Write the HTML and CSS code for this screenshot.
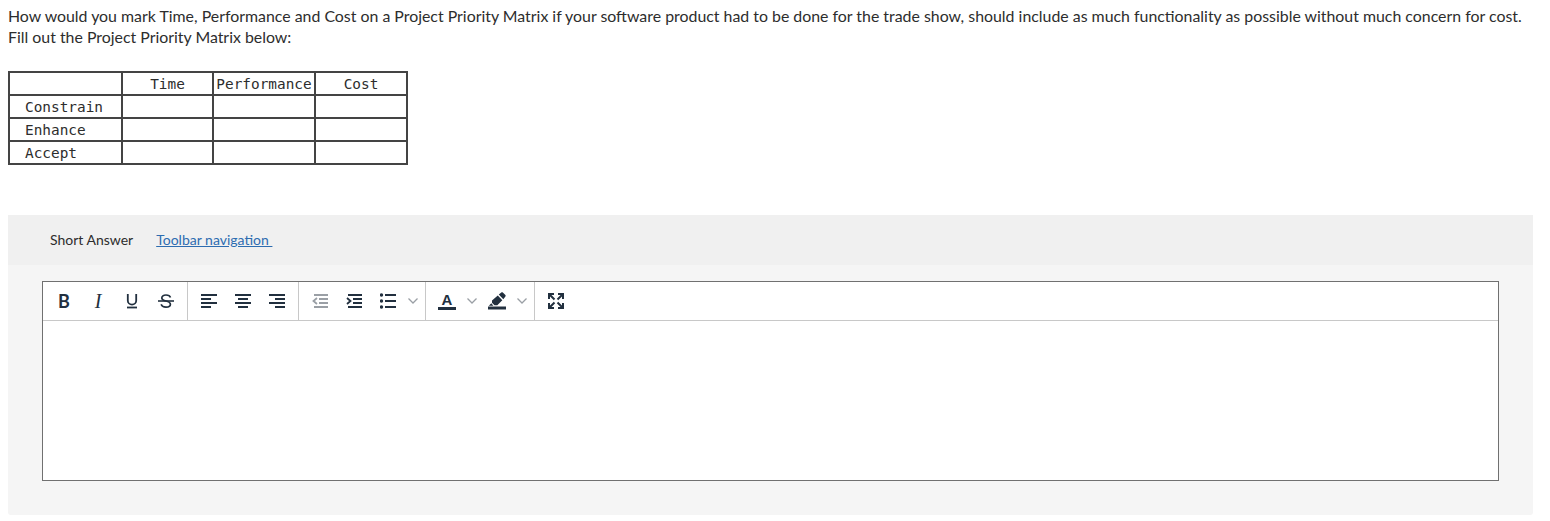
FILE: index.html
```html
<!DOCTYPE html>
<html lang="en">
<head>
	<meta charset="UTF-8" />
	<title>Short Answer</title>
	<link rel="stylesheet" href="styles.css">
</head>
<body>

<p class="question">How would you mark Time, Performance and Cost on a Project Priority Matrix if your software product had to be done for the trade show, should include as much functionality as possible without much concern for cost.<br>Fill out the Project Priority Matrix below:</p>

<table class="matrix">
	<tr><td></td><td class="mid">Time</td><td class="mid">Performance</td><td class="mid">Cost</td></tr>
	<tr><td class="label">Constrain</td><td></td><td></td><td></td></tr>
	<tr><td class="label">Enhance</td><td></td><td></td><td></td></tr>
	<tr><td class="label">Accept</td><td></td><td></td><td></td></tr>
</table>

<section class="answer">
	<div class="answer-head">
		<span>Short Answer</span>
		<a href="#">Toolbar navigation&nbsp;</a>
	</div>
	<div class="answer-body">
		<div class="editor">
			<div class="toolbar">
				<div class="group group-text">
					<button class="txt bold">B</button>
					<button class="txt italic">I</button>
					<button class="ico"><svg width="16" height="16" viewBox="0 0 16 16"><path d="M3.800 1v6.500a4.200 4.200 0 0 0 8.400 0V1" fill="none" stroke="#22303f" stroke-width="1.800"/><path d="M3 14.500h10" stroke="#22303f" stroke-width="1.800"/></svg></button>
					<button class="ico"><svg width="16" height="16" viewBox="0 0 16 16"><path d="M12.500 4.600C12 3 10.400 2 8 2 5.400 2 3.800 3.200 3.800 5c0 1.400 1 2.200 4.200 3 3.200.8 4.400 1.600 4.400 3.200 0 1.800-1.800 2.900-4.400 2.900-2.600 0-4.300-1-4.800-2.800" fill="none" stroke="#22303f" stroke-width="1.700"/><path d="M0 8h16" stroke="#22303f" stroke-width="1.600"/></svg></button>
				</div>
				<div class="group group-align">
					<button class="ico"><svg width="16" height="16" viewBox="0 0 16 16"><path d="M0 2h16M0 6h10M0 10h16M0 14h10" stroke="#22303f" stroke-width="1.800"/></svg></button>
					<button class="ico"><svg width="16" height="16" viewBox="0 0 16 16"><path d="M0 2h16M3 6h10M0 10h16M3 14h10" stroke="#22303f" stroke-width="1.800"/></svg></button>
					<button class="ico"><svg width="16" height="16" viewBox="0 0 16 16"><path d="M0 2h16M6 6h10M0 10h16M6 14h10" stroke="#22303f" stroke-width="1.800"/></svg></button>
				</div>
				<div class="group group-list">
					<button class="ico"><svg width="16" height="16" viewBox="0 0 16 16"><path d="M2 2h14M7 6h9M7 10h9M2 14h14" stroke="#9a9fa5" stroke-width="1.800"/><path d="M5 5 1.500 8 5 11" fill="none" stroke="#9a9fa5" stroke-width="1.800"/></svg></button>
					<button class="ico"><svg width="16" height="16" viewBox="0 0 16 16"><path d="M2 2h14M7 6h9M7 10h9M2 14h14" stroke="#22303f" stroke-width="1.800"/><path d="M1 5 4.500 8 1 11" fill="none" stroke="#22303f" stroke-width="1.800"/></svg></button>
					<button class="ico"><svg width="16" height="16" viewBox="0 0 16 16"><path d="M5 2h11M5 8h11M5 14h11" stroke="#22303f" stroke-width="1.800"/><circle cx="1.500" cy="2" r="1.700" fill="#22303f"/><circle cx="1.500" cy="8" r="1.700" fill="#22303f"/><circle cx="1.500" cy="14" r="1.700" fill="#22303f"/></svg></button>
					<svg class="chev" width="10" height="6" viewBox="0 0 10 6"><path d="M.5.500 5 5 9.500.500" fill="none" stroke="#9a9fa5" stroke-width="1.300"/></svg>
				</div>
				<div class="group group-color">
					<button class="ico color-a"><span class="letter">A</span></button>
					<svg class="chev" width="10" height="6" viewBox="0 0 10 6"><path d="M.5.500 5 5 9.500.500" fill="none" stroke="#9a9fa5" stroke-width="1.300"/></svg>
					<button class="ico marker"><svg width="18" height="18" viewBox="0 0 18 18"><path d="M10.800 2.600 13.300.6c.5-.4 1.100-.4 1.500 0l2.600 2.500c.4.500.4 1.100 0 1.500L15.300 7.300zM9.800 3.500l4.500 4.800-5 5H6.500L4 10.800V8.500zM3.300 11.200.8 13.800h4.600z" fill="#22303f"/><path d="M0 16h18" stroke="#22303f" stroke-width="3"/></svg></button>
					<svg class="chev" width="10" height="6" viewBox="0 0 10 6"><path d="M.5.500 5 5 9.500.500" fill="none" stroke="#9a9fa5" stroke-width="1.300"/></svg>
				</div>
				<div class="group group-full">
					<button class="ico"><svg width="16" height="16" viewBox="0 0 16 16"><path d="M1 6V1h5M15 6V1h-5M1 10v5h5M15 10v5h-5" fill="none" stroke="#22303f" stroke-width="2"/><path d="M1.500 1.500 6.500 6.500M14.500 1.500 9.500 6.500M1.500 14.500 6.500 9.500M14.500 14.500 9.500 9.500" stroke="#22303f" stroke-width="2"/></svg></button>
				</div>
			</div>
			<div class="edit-area"></div>
		</div>
	</div>
</section>

</body>
</html>
```

FILE: styles.css
```css
body {
	margin: 0;
	padding: 5px 17px 6px 8px;
	font-family: "Lato", "Open Sans", sans-serif;
	color: #2d2d2d;
	background: white;
}

.question {
	margin: 0 0 24px;
	font-size: 15.88px;
	line-height: 21px;
	white-space: nowrap;
}

.matrix {
	border-collapse: collapse;
	table-layout: fixed;
	width: 400px;
	font-family: "DejaVu Sans Mono", monospace;
	font-size: 14.4px;
	border: 2px solid #444;
}

.matrix td {
	border: 2px solid #444;
	height: 21px;
	padding: 0;
}

.matrix td:nth-child(1) { width: 111px; }
.matrix td:nth-child(2) { width: 89px; }
.matrix td:nth-child(3) { width: 100px; }

.matrix .mid {
	text-align: center;
}

.matrix .label {
	padding-left: 15px;
}

.answer {
	margin-top: 50px;
	border-radius: 3px;
	background: #f5f5f5;
}

.answer-head {
	display: flex;
	align-items: center;
	gap: 23px;
	height: 50px;
	padding: 0 0 2px 42px;
	box-sizing: border-box;
	background: #f0f0f0;
	font-size: 14px;
}

.answer-head a {
	color: #2d6cb0;
}

.answer-body {
	padding: 16px 34px 34px;
}

.editor {
	border: 1px solid #707070;
	background: white;
}

.toolbar {
	display: flex;
	height: 38px;
	border-bottom: 1px solid #c8c8c8;
}

.group {
	display: flex;
	align-items: center;
	padding: 0 13px;
	border-right: 1px solid #c8c8c8;
	gap: 18px;
}

.group:last-child {
	border-right: none;
}

.group-list {
	padding-right: 7px;
}

.group-list .chev {
	margin-left: -6px;
}

.group-color {
	gap: 11px;
	padding: 0 7px 0 12px;
}

button {
	border: none;
	background: none;
	padding: 0;
	display: flex;
	color: #22303f;
}

.txt {
	font-family: "Lato", sans-serif;
	font-size: 18px;
	line-height: 18px;
	width: 16px;
	justify-content: center;
}

.bold {
	font-weight: 700;
}

.italic {
	font-family: "Liberation Serif", serif;
	font-size: 20px;
	font-style: italic;
}

.letter {
	display: block;
	width: 18px;
	border-bottom: 3px solid #22303f;
	font-size: 15px;
	font-weight: 700;
	line-height: 14px;
	text-align: center;
}

.edit-area {
	height: 159px;
}
```
